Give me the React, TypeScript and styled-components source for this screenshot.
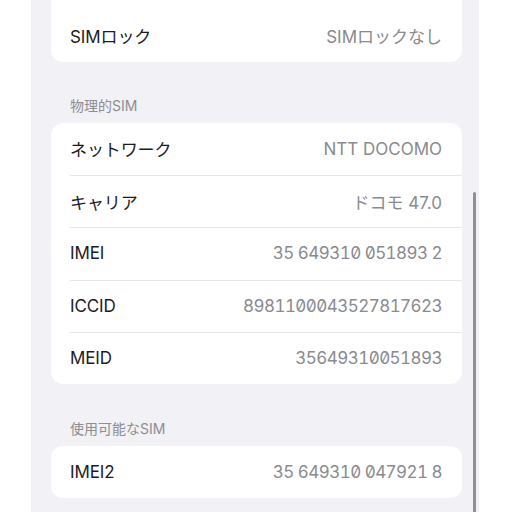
import React from "react";
import styled, { createGlobalStyle } from "styled-components";

const GlobalStyle = createGlobalStyle`
  html, body {
    margin: 0;
    padding: 0;
    background: #ffffff;
  }
  body {
    font-family: Inter, "Noto Sans CJK JP", sans-serif;
    -webkit-font-smoothing: antialiased;
  }
`;

const Viewport = styled.div`
  width: 512px;
  height: 512px;
  overflow: hidden;
  background: #ffffff;
  display: flex;
  padding: 0 33px 0 31px;
  box-sizing: border-box;
`;

const Screen = styled.div`
  position: relative;
  flex: 1;
  height: 512px;
  overflow: hidden;
  background: #f1f1f6;
`;

const Content = styled.div`
  display: flex;
  flex-direction: column;
  padding: 0 17px 0 20px;
  margin-top: -43.5px;
`;

const Card = styled.div`
  background: #ffffff;
  border-radius: 12px;
  overflow: hidden;
  display: flex;
  flex-direction: column;
`;

const Row = styled.div<{ $h?: number }>`
  height: ${(p) => p.$h ?? 52.4}px;
  box-sizing: border-box;
  display: flex;
  align-items: center;
  justify-content: space-between;
  padding: 0 20px 0 19px;
  position: relative;
  & + &::before {
    content: "";
    position: absolute;
    top: 0;
    left: 19px;
    right: 0;
    height: 1px;
    background: #e6e6ea;
  }
`;

const Label = styled.span`
  font-family: Inter, "Noto Sans CJK JP", sans-serif;
  font-size: 17px;
  color: #1c1c1e;
  letter-spacing: -0.1px;
`;

const Value = styled.span<{ $mono?: boolean }>`
  font-family: Inter, "Noto Sans CJK JP", sans-serif;
  font-size: 17px;
  color: #8a8a8f;
  letter-spacing: ${(p) => (p.$mono ? "-0.55px" : "0")};
  font-feature-settings: ${(p) => (p.$mono ? '"tnum" 1, "zero" 1' : "normal")};
`;

const SectionHeader = styled.div<{ $top: number }>`
  font-family: Inter, "Noto Sans CJK JP", sans-serif;
  font-size: 14px;
  line-height: 18px;
  color: #8d8d92;
  padding: 0 0 0 19px;
  margin: ${(p) => p.$top}px 0 7.5px;
`;

const ScrollBar = styled.div`
  position: absolute;
  right: 3px;
  top: 192px;
  width: 3px;
  height: 340px;
  border-radius: 2px;
  background: #8f8f94;
`;

type Item = { label: string; value: string; mono?: boolean };

const physical: Item[] = [
  { label: "ネットワーク", value: "NTT DOCOMO" },
  { label: "キャリア", value: "ドコモ 47.0" },
  { label: "IMEI", value: "35 649310 051893 2", mono: true },
  { label: "ICCID", value: "8981100043527817623", mono: true },
  { label: "MEID", value: "35649310051893", mono: true },
];

const available: Item[] = [
  { label: "IMEI2", value: "35 649310 047921 8", mono: true },
];

const ListCard: React.FC<{ items: Item[] }> = ({ items }) => (
  <Card>
    {items.map((it) => (
      <Row key={it.label}>
        <Label>{it.label}</Label>
        <Value $mono={it.mono}>{it.value}</Value>
      </Row>
    ))}
  </Card>
);

export default function App() {
  return (
    <>
      <GlobalStyle />
      <Viewport>
        <Screen>
          <Content>
            <Card>
              <Row $h={52.5} />
              <Row $h={53}>
                <Label>SIMロック</Label>
                <Value>SIMロックなし</Value>
              </Row>
            </Card>
            <SectionHeader $top={35}>物理的SIM</SectionHeader>
            <ListCard items={physical} />
            <SectionHeader $top={36}>使用可能なSIM</SectionHeader>
            <ListCard items={available} />
          </Content>
          <ScrollBar />
        </Screen>
      </Viewport>
    </>
  );
}
